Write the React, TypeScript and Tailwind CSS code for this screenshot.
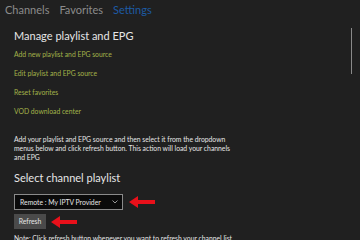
import React from 'react';

const links = [
  'Add new playlist and EPG source',
  'Edit playlist and EPG source',
  'Reset favorites',
  'VOD download center',
];

function RedArrow({ className }: { className?: string }) {
  return (
    <svg className={className} width="26" height="12" viewBox="0 0 26 12">
      <polygon points="0,6 9,0 9,4 26,4 26,8 9,8 9,12" fill="#e8101a" />
    </svg>
  );
}

export default function App() {
  return (
    <div className="relative w-[360px] h-[240px] overflow-hidden bg-[#202020] font-['Lato',sans-serif]">
      <div className="flex gap-[10px] pl-[5px] pt-[1px] text-[11px] leading-[18px]">
        <span className="text-[#8c8c8c]">Channels</span>
        <span className="text-[#8c8c8c]">Favorites</span>
        <span className="text-[#1d5aa3]">Settings</span>
      </div>

      <div className="pl-[14px] pt-[8px]">
        <h1 className="text-[11px] leading-[18px] text-[#e6e6e6]">Manage playlist and EPG</h1>
        <div className="mt-[5px] flex flex-col gap-[10px]">
          {links.map(l => (
            <div key={l} className="text-[6.8px] leading-[9px] text-[#a3b34a]">{l}</div>
          ))}
        </div>

        <p className="mt-[19px] w-[222px] text-[6.8px] leading-[9px] text-[#e6e6e6]">
          Add your playlist and EPG source and then select it from the dropdown menus below and click refresh button. This action will load your channels and EPG
        </p>

        <h2 className="mt-[7px] text-[11px] leading-[18px] text-[#e6e6e6]">Select channel playlist</h2>

        <div className="mt-[7px] flex items-center gap-[6px]">
          <div className="flex items-center justify-between w-[109px] h-[16px] bg-[#0a0a0a] border border-[#8a8a8a] pl-[5px] pr-[4px]">
            <span className="text-[6.8px] text-[#e6e6e6] whitespace-nowrap">Remote : My IPTV Provider</span>
            <svg width="6" height="4" viewBox="0 0 6 4"><path d="M0.5 0.5 L3 3 L5.5 0.5" stroke="#bbb" fill="none" strokeWidth="0.8" /></svg>
          </div>
          <RedArrow />
        </div>

        <div className="mt-[4px] flex items-center gap-[5px]">
          <div className="flex items-center justify-center w-[32px] h-[15px] bg-[#4a4a4a] text-[6.8px] text-[#e6e6e6]">Refresh</div>
          <RedArrow />
        </div>

        <p className="mt-[5px] text-[6.8px] leading-[9px] text-[#e6e6e6] whitespace-nowrap">
          Note: Click refresh button whenever you want to refresh your channel list
        </p>
      </div>

      <div className="absolute left-[351px] top-[28px] w-[1px] h-[46px] bg-[#8a8a8a]" />
    </div>
  );
}
